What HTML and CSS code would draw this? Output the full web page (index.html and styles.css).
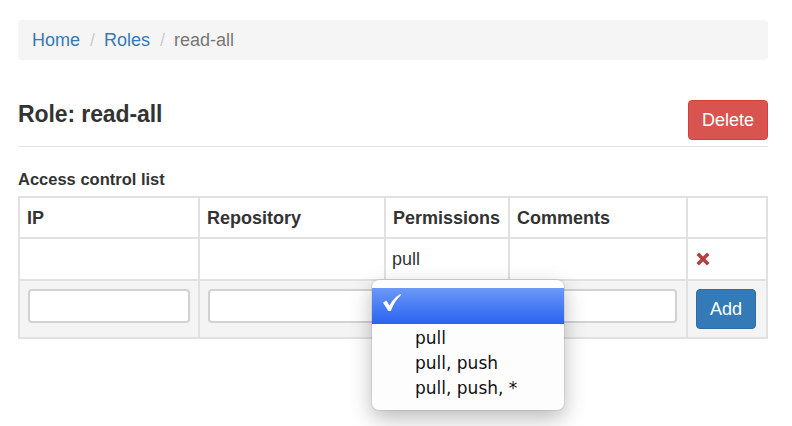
FILE: index.html
```html
<!DOCTYPE html>
<html>
<head>
<meta charset="utf-8">
<link rel="stylesheet" href="styles.css">
</head>
<body>
<div class="page">
  <nav class="breadcrumb">
    <a href="#">Home</a><span class="sep">/</span><a href="#">Roles</a><span class="sep">/</span><span class="active">read-all</span>
  </nav>
  <div class="header">
    <h3 class="title">Role: read-all</h3>
    <button class="btn btn-danger">Delete</button>
  </div>
  <label class="acl-label">Access control list</label>
  <table class="acl">
    <colgroup>
      <col class="c-ip"><col class="c-repo"><col class="c-perm"><col class="c-comm"><col class="c-act">
    </colgroup>
    <thead>
      <tr><th>IP</th><th>Repository</th><th>Permissions</th><th>Comments</th><th></th></tr>
    </thead>
    <tbody>
      <tr class="data">
        <td></td><td></td><td>pull</td><td></td>
        <td><svg class="remove" width="14" height="14" viewBox="0 0 14 14"><path d="M0.5 3 L3 0.5 L7 4.5 L11 0.5 L13.5 3 L9.5 7 L13.5 11 L11 13.5 L7 9.5 L3 13.5 L0.5 11 L4.5 7 Z" fill="#b3403e"/></svg></td>
      </tr>
      <tr class="new">
        <td><input class="field" type="text"></td>
        <td><input class="field" type="text"></td>
        <td><select class="field"><option></option></select></td>
        <td><input class="field" type="text"></td>
        <td><button class="btn btn-primary">Add</button></td>
      </tr>
    </tbody>
  </table>
  <div class="popup">
    <div class="opt selected"><svg class="check" width="18" height="17" viewBox="0 0 18 17"><path d="M0 8.8 L3.2 6.6 L6.6 11.6 C9 6.6 12.5 2.6 17.4 0 L18 1.1 C13.6 5 10.6 10.2 7.8 17 L5.4 17 Z" fill="#fff"/></svg></div>
    <div class="opts">
      <div class="opt">pull</div>
      <div class="opt">pull, push</div>
      <div class="opt">pull, push, *</div>
    </div>
  </div>
</div>
</body>
</html>
```

FILE: styles.css
```css
* { box-sizing: border-box; }
html, body { margin: 0; padding: 0; background: #fff; }
body {
  font-family: "Liberation Sans", Arial, sans-serif;
  color: #333;
  font-size: 18px;
}
.page {
  position: relative;
  width: 792px;
  height: 426px;
  padding: 20px 24px 0 18px;
}
.breadcrumb {
  display: flex;
  align-items: center;
  height: 40px;
  padding: 0 14px;
  background: #f5f5f5;
  border-radius: 4px;
  font-size: 18px;
  line-height: 20px;
}
.breadcrumb a { color: #337ab7; text-decoration: none; }
.breadcrumb .sep { color: #ccc; padding: 0 9px 0 10px; }
.breadcrumb .active { color: #777; }

.header {
  display: flex;
  justify-content: space-between;
  align-items: flex-start;
  margin-top: 40px;
  padding-bottom: 6px;
  border-bottom: 1px solid #e6e6e6;
}
.title {
  margin: 0;
  font-size: 23px;
  line-height: 28px;
  font-weight: bold;
  color: #333;
  letter-spacing: -0.1px;
}
.btn {
  font-family: "Liberation Sans", Arial, sans-serif;
  font-size: 18px;
  color: #fff;
  border-radius: 4px;
  border: 1px solid transparent;
  padding: 0;
  height: 40px;
  line-height: 38px;
  text-align: center;
}
.btn-danger { width: 80px; background: #d9534f; border-color: #d43f3a; }
.btn-primary { width: 60px; background: #337ab7; border-color: #2e6da4; }

.acl-label {
  display: block;
  margin-top: 22px;
  margin-bottom: 7px;
  font-size: 16.5px;
  line-height: 20px;
  font-weight: bold;
  color: #333;
}
.acl {
  width: 748px;
  table-layout: fixed;
  border-collapse: collapse;
  border: 2px solid #e1e1e1;
}
.c-ip { width: 180px; }
.c-repo { width: 186px; }
.c-perm { width: 124px; }
.c-comm { width: 178px; }
.c-act { width: 80px; }
.acl th, .acl td {
  border: 2px solid #e1e1e1;
  text-align: left;
  font-size: 18px;
  line-height: 20px;
  padding: 10px 7px 9px;
  vertical-align: middle;
}
.acl th { font-weight: bold; color: #333; }
.acl tr.data td { padding: 10px 6px 10px 6px; color: #333; }
.acl tr.data td:last-child { padding-left: 8px; }
.remove { display: block; }
.acl tr.new td {
  background: #f4f4f4;
  padding: 8px 9px 8px 8px;
  vertical-align: top;
}
.acl tr.new td:last-child { padding-left: 8px; }
.field {
  display: block;
  width: 100%;
  height: 34px;
  margin-top: 0;
  border: 2px solid #d2d2d2;
  border-radius: 4px;
  background: #fff;
  font-size: 16px;
  -webkit-appearance: none;
  appearance: none;
}
.acl tr.new td:first-child .field { width: 162px; }

.popup {
  position: absolute;
  left: 372px;
  top: 280px;
  width: 192px;
  height: 130px;
  background: #fdfdfd;
  border-radius: 7px;
  padding-top: 8px;
  box-shadow: 0 0 0 1px rgba(0,0,0,0.07), 0 8px 22px rgba(0,0,0,0.28);
  font-family: "DejaVu Sans", sans-serif;
  color: #111;
}
.opt.selected {
  height: 36px;
  background: linear-gradient(#6c99f7, #2962f0);
  padding: 6px 0 0 11px;
}
.check { display: block; }
.opts { padding-top: 2px; }
.opts .opt {
  height: 25px;
  line-height: 25px;
  font-size: 17px;
  padding-left: 43px;
  white-space: nowrap;
}
```
